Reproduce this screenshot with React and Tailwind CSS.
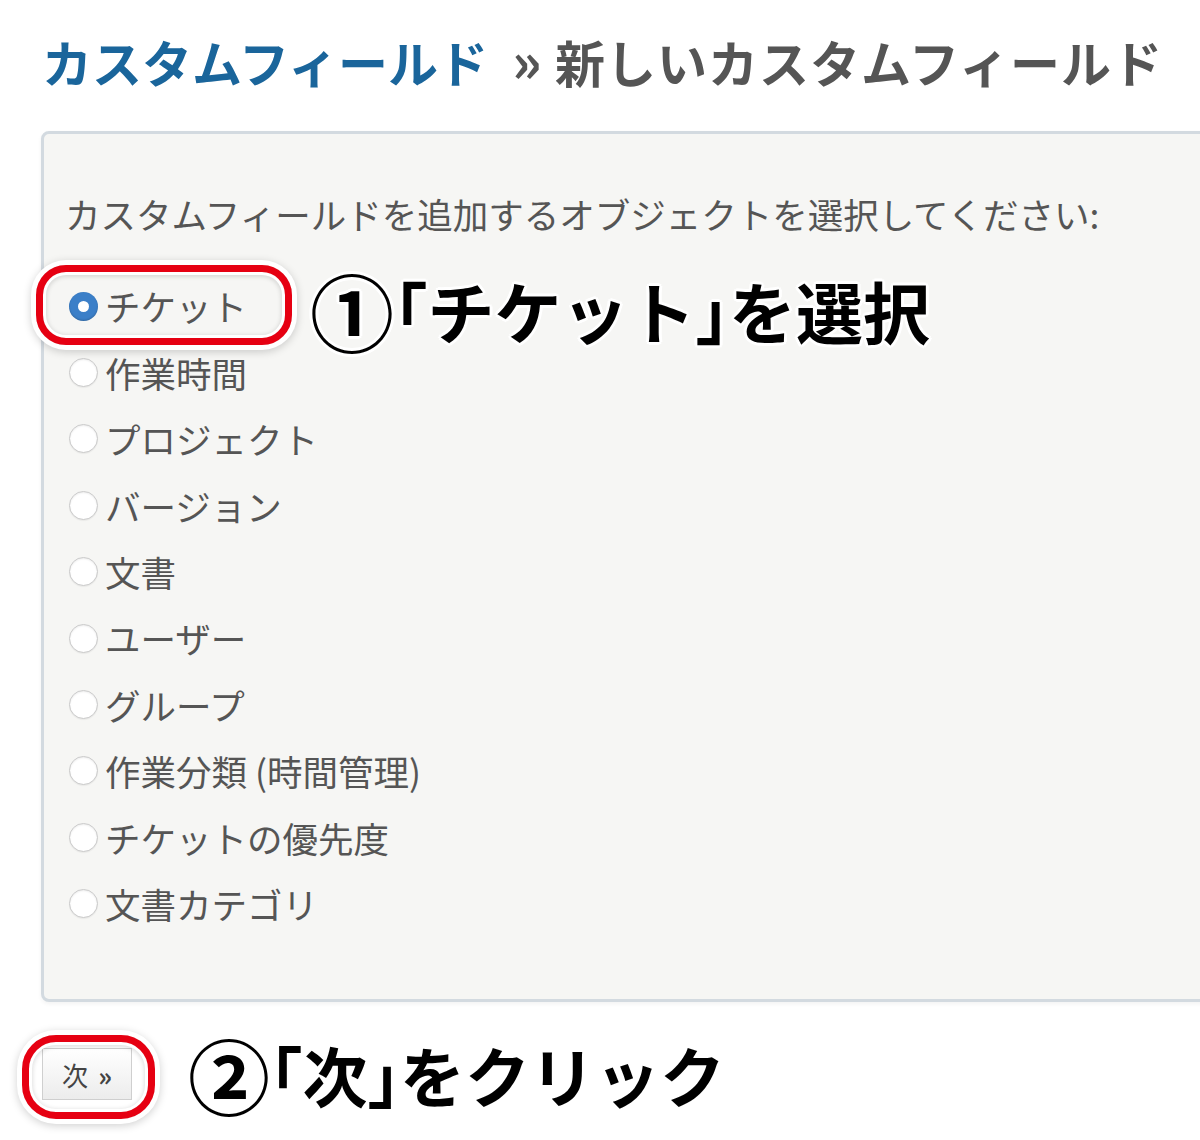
import React, { useState } from "react";

const objects = [
  "チケット",
  "作業時間",
  "プロジェクト",
  "バージョン",
  "文書",
  "ユーザー",
  "グループ",
  "作業分類 (時間管理)",
  "チケットの優先度",
  "文書カテゴリ",
];

const outline =
  "[text-shadow:0_0_4px_#fff,2px_2px_0_#fff,-2px_-2px_0_#fff,2px_-2px_0_#fff,-2px_2px_0_#fff,0_3px_0_#fff,0_-3px_0_#fff,3px_0_0_#fff,-3px_0_0_#fff]";

function Radio({ checked }) {
  if (checked) {
    return (
      <span className="flex h-[29px] w-[29px] shrink-0 items-center justify-center rounded-full bg-[#3b7fc8] shadow-[inset_0_-1px_2px_rgba(0,0,0,0.2)]">
        <span className="h-[11px] w-[11px] rounded-full bg-white" />
      </span>
    );
  }
  return (
    <span className="h-[29px] w-[29px] shrink-0 rounded-full border border-[#c9c9c9] bg-white shadow-[inset_0_1px_2px_rgba(0,0,0,0.08),0_1px_1px_rgba(0,0,0,0.05)]" />
  );
}

export default function App() {
  const [selected, setSelected] = useState(0);

  return (
    <div className="relative h-[1140px] w-[1200px] overflow-hidden bg-white font-['Noto_Sans_CJK_JP',sans-serif]">
      <h1 className="pl-[42px] pt-[27px] text-[50px] font-bold leading-[64px] text-[#555]">
        <span className="text-[#1a659b]">カスタムフィールド</span>
        <span className="ml-[24px] tracking-[1px]">
          <span className="text-[56px]">»</span> 新しいカスタムフィールド
        </span>
      </h1>

      <div className="ml-[41px] mt-[38px] h-[871px] w-[1200px] rounded-[8px] border-[3px] border-[#d3dae0] bg-[#f6f6f4] shadow-[0_2px_4px_rgba(0,0,0,0.05)]">
        <p className="pl-[21px] pt-[55px] text-[35.5px] leading-[50px] text-[#555]">
          カスタムフィールドを追加するオブジェクトを選択してください:
        </p>
        <div className="mt-[34px] flex flex-col pl-[25px]">
          {objects.map((name, i) => (
            <label
              key={name}
              onClick={() => setSelected(i)}
              className="flex h-[66.4px] cursor-pointer items-center gap-[7px] text-[35.5px] text-[#555]"
            >
              <Radio checked={selected === i} />
              <span className="leading-none">{name}</span>
            </label>
          ))}
        </div>
      </div>

      <div className="ml-[42px] mt-[46px]">
        <button className="flex h-[52px] w-[90px] items-center justify-center gap-[10px] border border-[#cfcfcf] bg-[linear-gradient(#fff,#ececec)] text-[26px] text-[#444]">
          <span>次</span>
          <span className="font-bold">»</span>
        </button>
      </div>

      {/* annotations */}
      <div className="absolute left-[36px] top-[265px] h-[80px] w-[256px] rounded-[30px] border-[7px] border-[#e60012] shadow-[0_0_0_5px_#fff,0_2px_8px_5px_rgba(0,0,0,0.18),inset_0_0_0_3px_#fff,inset_0_1px_4px_4px_rgba(0,0,0,0.12)]" />
      <div className="absolute left-[22px] top-[1035px] h-[84px] w-[133px] rounded-[34px] border-[7px] border-[#e60012] shadow-[0_0_0_5px_#fff,0_2px_8px_5px_rgba(0,0,0,0.18),inset_0_0_0_3px_#fff,inset_0_1px_4px_4px_rgba(0,0,0,0.12)]" />

      <div className={`absolute left-[310px] top-[270px] flex items-center text-[67px] font-bold leading-[80px] text-black ${outline}`}>
        <span className="text-[84px] leading-[80px]">①</span>
        <span className="[font-feature-settings:'halt']">「</span>チケット
        <span className="[font-feature-settings:'halt']">」</span>を選択
      </div>
      <div className={`absolute left-[188px] top-[1034px] flex items-center text-[65px] font-bold leading-[80px] text-black ${outline}`}>
        <span className="text-[82px] leading-[80px]">②</span>
        <span className="[font-feature-settings:'halt']">「</span>次
        <span className="[font-feature-settings:'halt']">」</span>をクリック
      </div>
    </div>
  );
}
